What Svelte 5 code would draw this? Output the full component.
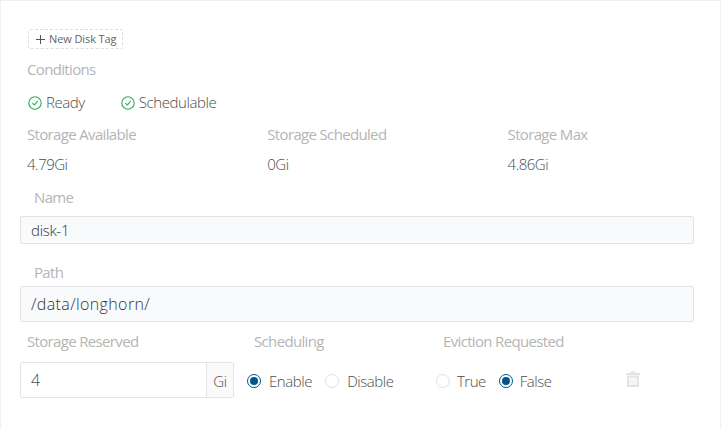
<script>
  const conditions = ['Ready', 'Schedulable'];
  const storage = [
    { label: 'Storage Available', value: '4.79Gi' },
    { label: 'Storage Scheduled', value: '0Gi' },
    { label: 'Storage Max', value: '4.86Gi' }
  ];
  let scheduling = $state('Enable');
  let eviction = $state('False');
</script>

{#snippet radio(text, on, pick)}
  <button class="radio" role="radio" aria-checked={on} onclick={pick}>
    <span class="dot" class:on></span><span>{text}</span>
  </button>
{/snippet}

<div class="panel">
  <button class="tag">
    <svg width="11" height="11" viewBox="0 0 11 11"><path d="M5.5 1v9M1 5.5h9" stroke="#555" stroke-width="1" /></svg>
    <span>New Disk Tag</span>
  </button>

  <div class="label conditions-label">Conditions</div>
  <div class="conditions">
    {#each conditions as c}
      <div class="condition">
        <svg width="14" height="14" viewBox="0 0 14 14" fill="none" stroke="#27ae60"><circle cx="7" cy="7" r="6.2" stroke-width="1.1" /><path d="M4.4 7.1l1.9 1.9 3.3-3.9" stroke-width="1.1" /></svg>
        <span>{c}</span>
      </div>
    {/each}
  </div>

  <div class="stats">
    {#each storage as s}
      <div class="stat">
        <div class="label">{s.label}</div>
        <div class="value">{s.value}</div>
      </div>
    {/each}
  </div>

  <div class="label name-label">Name</div>
  <div class="field name">disk-1</div>
  <div class="label path-label">Path</div>
  <div class="field path">/data/longhorn/</div>

  <div class="bottom">
    <div class="reserved">
      <div class="label">Storage Reserved</div>
      <div class="group"><div class="number">4</div><div class="unit">Gi</div></div>
    </div>
    <div class="scheduling">
      <div class="label">Scheduling</div>
      <div class="radios">
        {@render radio('Enable', scheduling === 'Enable', () => (scheduling = 'Enable'))}
        {@render radio('Disable', scheduling === 'Disable', () => (scheduling = 'Disable'))}
      </div>
    </div>
    <div class="eviction">
      <div class="label">Eviction Requested</div>
      <div class="radios">
        {@render radio('True', eviction === 'True', () => (eviction = 'True'))}
        {@render radio('False', eviction === 'False', () => (eviction = 'False'))}
      </div>
    </div>
    <svg class="trash" width="14" height="17" viewBox="0 0 14 17"><path d="M4.5 0h5v2h-5z" fill="#e6e8ea" /><path d="M0 2h14v2H0z" fill="#e1e4e7" /><path d="M2 5.5h10V15H2z" fill="#f3f5f6" stroke="#e1e4e7" stroke-width="2" /></svg>
  </div>
</div>

<style>
  .panel {
    box-sizing: border-box;
    width: 721px;
    height: 429px;
    padding: 28px 26px 0 19px;
    border: 1px solid #f0f0f0;
    border-bottom: 0;
    background: #fff;
    color: #4c4c4c;
    font-family: 'Open Sans', 'Noto Sans', sans-serif;
    font-size: 15px;
    font-weight: 300;
    line-height: 20px;
    letter-spacing: -0.42px;
    white-space: nowrap;
    overflow: hidden;
  }
  button {
    font: inherit;
    color: inherit;
    letter-spacing: inherit;
    padding: 0;
    margin: 0;
    background: none;
    border: 0;
  }
  .tag {
    display: flex;
    align-items: center;
    gap: 3px;
    box-sizing: border-box;
    width: 95px;
    height: 20px;
    margin-left: 8px;
    padding-left: 6px;
    border: 1px dashed #dedede;
    border-radius: 2px;
    font-size: 11px;
    font-weight: 400;
    color: #666;
    letter-spacing: -0.1px;
  }
  .label { color: #b5b5b5; padding-left: 7px; height: 20px; line-height: 18px; font-weight: 400; letter-spacing: -0.66px; }
  .conditions-label { margin-top: 11px; }
  .conditions { display: flex; gap: 36px; padding-left: 8px; margin-top: 13px; }
  .condition { display: flex; align-items: center; gap: 4px; height: 20px; }
  .condition span { height: 20px; line-height: 18px; }
  .stats { display: flex; margin-top: 12px; }
  .stat { flex: 0 0 240.3px; }
  .stat .value { padding-left: 7px; margin-top: 10px; height: 20px; line-height: 18px; letter-spacing: -0.5px; }
  .name-label { margin-top: 13px; padding-left: 14px; }
  .field {
    box-sizing: border-box;
    border: 1px solid #e3e4e6;
    border-radius: 2px;
    background: #f8fafc;
    padding-left: 10px;
    color: #333;
  }
  .name { margin-top: 8px; height: 28px; line-height: 27px; letter-spacing: -0.3px; }
  .path-label { margin-top: 19px; padding-left: 14px; }
  .path { margin-top: 3px; height: 36px; line-height: 35px; font-size: 16px; letter-spacing: 0.38px; }
  .bottom { display: flex; align-items: flex-start; margin-top: 10px; }
  .reserved { width: 226px; }
  .group { display: flex; box-sizing: border-box; width: 214px; height: 36px; margin-top: 10px; border: 1px solid #e3e4e6; border-radius: 2px; line-height: 35px; }
  .number { flex: 1; padding-left: 10px; font-size: 16px; }
  .unit { width: 26px; border-left: 1px solid #e3e4e6; background: #fafafa; text-align: center; line-height: 37px; }
  .scheduling { width: 189px; }
  .eviction { width: 191px; }
  .scheduling .label, .eviction .label { padding-left: 8px; }
  .radios { display: flex; gap: 13px; padding-left: 1px; margin-top: 19px; }
  .radio { display: flex; align-items: center; gap: 8px; height: 20px; }
  .eviction .radio { gap: 7px; letter-spacing: -0.5px; }
  .dot { box-sizing: border-box; width: 14px; height: 14px; border: 1px solid #e0e0e0; border-radius: 50%; display: flex; align-items: center; justify-content: center; }
  .dot.on { border-color: #00558b; }
  .dot.on::after { content: ''; width: 8px; height: 8px; border-radius: 50%; background: #00558b; }
  .trash { margin-top: 39px; }
</style>
